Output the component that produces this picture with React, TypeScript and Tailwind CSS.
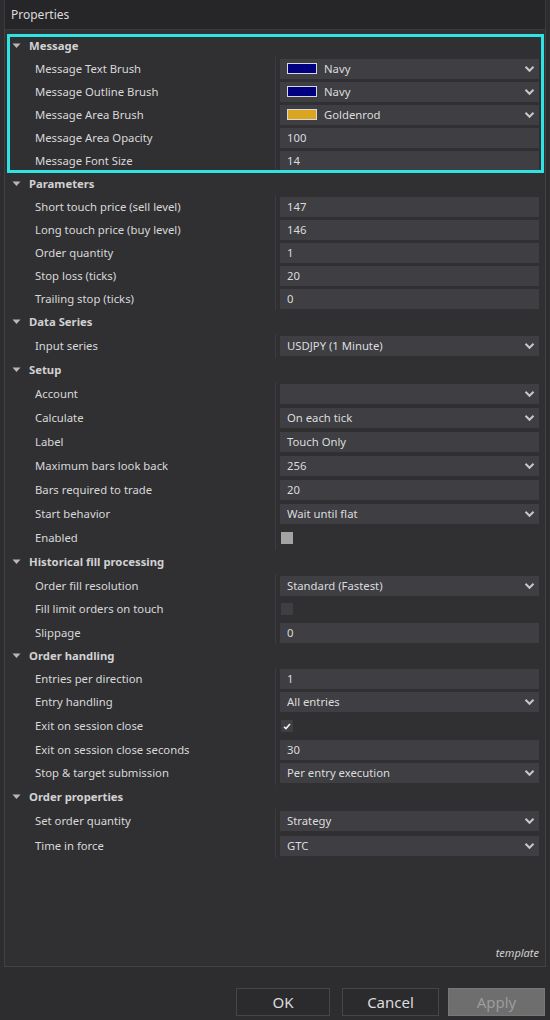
import React from "react";

type Row =
  | { kind: "header"; label: string; h: number }
  | { kind: "text"; label: string; value: string; h: number }
  | { kind: "select"; label: string; value: string; h: number; swatch?: string }
  | { kind: "check"; label: string; state: "gray" | "empty" | "checked"; h: number };

const Chevron = () => (
  <svg width="11" height="8" viewBox="0 0 11 8" className="shrink-0">
    <path d="M1.5 1.8 L5.5 5.8 L9.5 1.8" fill="none" stroke="#c8c8c8" strokeWidth="2" />
  </svg>
);

const Triangle = () => (
  <svg width="9" height="6" viewBox="0 0 9 6" className="shrink-0">
    <path d="M0.5 0.5 L8.5 0.5 L4.5 5 Z" fill="#b8b8b8" />
  </svg>
);

function PropRow({ row }: { row: Row }) {
  if (row.kind === "header") {
    return (
      <div className="flex items-center pl-[7px]" style={{ height: row.h }}>
        <Triangle />
        <span className="ml-[8px] font-bold text-[#d2d2d2]">{row.label}</span>
      </div>
    );
  }
  let value: React.ReactNode = null;
  if (row.kind === "text") {
    value = (
      <div className="h-[20px] bg-[#3e3e43] flex items-center pl-[7px] text-[#dcdcdc]">{row.value}</div>
    );
  } else if (row.kind === "select") {
    value = (
      <div className="h-[20px] bg-[#3e3e43] flex items-center pl-[7px] pr-[4px] text-[#dcdcdc]">
        {row.swatch && (
          <span
            className="w-[30px] h-[11px] border border-[#d8d8d8] mr-[7px] shrink-0"
            style={{ backgroundColor: row.swatch }}
          />
        )}
        <span className="flex-1">{row.value}</span>
        <Chevron />
      </div>
    );
  } else if (row.kind === "check") {
    value = (
      <div className="h-[20px] flex items-center pl-[1px]">
        {row.state === "gray" && <span className="w-[12px] h-[12px] bg-[#a3a3a3]" />}
        {row.state === "empty" && <span className="w-[12px] h-[12px] bg-[#3e3e43]" />}
        {row.state === "checked" && (
          <span className="w-[12px] h-[12px] bg-[#3e3e43] flex items-center justify-center">
            <svg width="8" height="7" viewBox="0 0 8 7">
              <path d="M1 3.8 L3 5.6 L7 1" fill="none" stroke="#f0f0f0" strokeWidth="1.6" />
            </svg>
          </span>
        )}
      </div>
    );
  }
  return (
    <div className="flex" style={{ height: row.h }}>
      <div className="w-[270px] shrink-0 flex items-center pl-[30px] text-[#d8d8d8]">{row.label}</div>
      <div className="flex-1 border-l border-[#3c3c40] flex flex-col justify-center pl-[4px] pr-[6px]">
        {value}
      </div>
    </div>
  );
}

const message: Row[] = [
  { kind: "header", label: "Message", h: 23 },
  { kind: "select", label: "Message Text Brush", value: "Navy", swatch: "#000080", h: 23 },
  { kind: "select", label: "Message Outline Brush", value: "Navy", swatch: "#000080", h: 23 },
  { kind: "select", label: "Message Area Brush", value: "Goldenrod", swatch: "#daa520", h: 23 },
  { kind: "text", label: "Message Area Opacity", value: "100", h: 23 },
  { kind: "text", label: "Message Font Size", value: "14", h: 23 },
];

const rest: Row[] = [
  { kind: "header", label: "Parameters", h: 23 },
  { kind: "text", label: "Short touch price (sell level)", value: "147", h: 23 },
  { kind: "text", label: "Long touch price (buy level)", value: "146", h: 23 },
  { kind: "text", label: "Order quantity", value: "1", h: 23 },
  { kind: "text", label: "Stop loss (ticks)", value: "20", h: 23 },
  { kind: "text", label: "Trailing stop (ticks)", value: "0", h: 23 },
  { kind: "header", label: "Data Series", h: 24 },
  { kind: "select", label: "Input series", value: "USDJPY (1 Minute)", h: 24 },
  { kind: "header", label: "Setup", h: 24 },
  { kind: "select", label: "Account", value: "", h: 24 },
  { kind: "select", label: "Calculate", value: "On each tick", h: 24 },
  { kind: "text", label: "Label", value: "Touch Only", h: 24 },
  { kind: "select", label: "Maximum bars look back", value: "256", h: 24 },
  { kind: "text", label: "Bars required to trade", value: "20", h: 24 },
  { kind: "select", label: "Start behavior", value: "Wait until flat", h: 24 },
  { kind: "check", label: "Enabled", state: "gray", h: 24 },
  { kind: "header", label: "Historical fill processing", h: 24 },
  { kind: "select", label: "Order fill resolution", value: "Standard (Fastest)", h: 23 },
  { kind: "check", label: "Fill limit orders on touch", state: "empty", h: 24 },
  { kind: "text", label: "Slippage", value: "0", h: 23 },
  { kind: "header", label: "Order handling", h: 24 },
  { kind: "text", label: "Entries per direction", value: "1", h: 22 },
  { kind: "select", label: "Entry handling", value: "All entries", h: 24 },
  { kind: "check", label: "Exit on session close", state: "checked", h: 24 },
  { kind: "text", label: "Exit on session close seconds", value: "30", h: 23 },
  { kind: "select", label: "Stop & target submission", value: "Per entry execution", h: 24 },
  { kind: "header", label: "Order properties", h: 24 },
  { kind: "select", label: "Set order quantity", value: "Strategy", h: 24 },
  { kind: "select", label: "Time in force", value: "GTC", h: 25 },
];

export default function App() {
  return (
    <div
      className="w-[550px] h-[1020px] bg-[#2d2d30] flex flex-col text-[11.3px] leading-none select-none"
      style={{ fontFamily: '"Noto Sans", "Open Sans", sans-serif' }}
    >
      <div className="mx-[4px] h-[30px] shrink-0 bg-[#262628] border-x border-b border-[#3a3a3e] flex items-center pl-[6px] text-[#dcdcdc] text-[12px]">
        Properties
      </div>
      <div className="mx-[4px] h-[937px] shrink-0 border-x border-b border-[#424246] bg-[#303033] flex flex-col pt-[4px] relative">
        <div className="relative">
          {message.map((r, i) => (
            <PropRow key={i} row={r} />
          ))}
          <div className="absolute left-[2px] right-[1px] top-[0px] bottom-[-1px] border-[3px] border-[#2fe3e3] pointer-events-none" />
        </div>
        {rest.map((r, i) => (
          <PropRow key={i} row={r} />
        ))}
        <div className="flex-1" />
        <div className="flex justify-end pr-[6px] pb-[8px] italic text-[#d0d0d0] text-[11px]">template</div>
      </div>
      <div className="flex-1 flex items-end justify-end pr-[5px] pb-[4px]">
        <button className="w-[94px] h-[28px] border border-[#46464a] bg-[#2b2b2e] text-[#dcdcdc] text-[15px]">OK</button>
        <button className="ml-[12px] w-[97px] h-[28px] border border-[#46464a] bg-[#2b2b2e] text-[#dcdcdc] text-[15px]">Cancel</button>
        <button className="ml-[9px] w-[97px] h-[28px] border border-[#777] bg-[#6e6e6e] text-[#9c9c9c] text-[15px]">Apply</button>
      </div>
    </div>
  );
}
